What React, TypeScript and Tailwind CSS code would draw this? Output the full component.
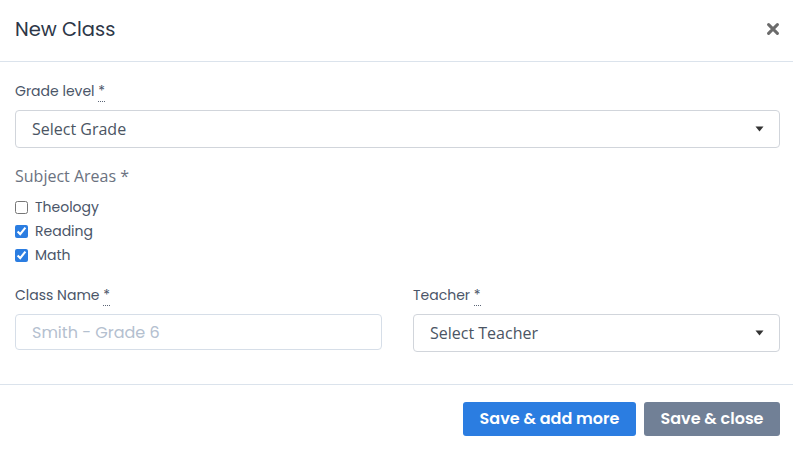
import { useState } from "react";

const poppins = { fontFamily: "Poppins, 'Open Sans', 'Noto Sans', sans-serif" };

function Req() {
  return (
    <abbr title="required" className="no-underline border-b border-dotted border-[#5b6576] leading-none">
      *
    </abbr>
  );
}

function Caret() {
  return (
    <svg width="9" height="6" viewBox="0 0 9 6" className="absolute right-[15px] top-1/2 -translate-y-1/2">
      <path d="M0.5 0.5 H8.5 L4.5 5.5 Z" fill="#333" />
    </svg>
  );
}

function SelectBox({ text }: { text: string }) {
  return (
    <div className="relative flex h-[38px] items-center rounded-[4px] border border-[#d1d5db] bg-white pl-4 text-[16px] text-[#4b5563] font-['Open_Sans',sans-serif]">
      {text}
      <Caret />
    </div>
  );
}

function Check({ label, checked }: { label: string; checked: boolean }) {
  const [on, setOn] = useState(checked);
  return (
    <label className="flex h-6 items-center gap-[7px] text-[14px] text-[#4a5568]">
      <input
        type="checkbox"
        checked={on}
        onChange={() => setOn(!on)}
        className="m-0 h-[13px] w-[13px] accent-[#2b7de1]"
      />
      <span style={poppins}>{label}</span>
    </label>
  );
}

export default function App() {
  return (
    <div className="h-[450px] w-[793px] overflow-hidden bg-white">
      {/* header */}
      <div className="flex h-[62px] items-center justify-between border-b border-[#dbe3ec] pl-[15px] pr-[13px]">
        <h1 className="mb-[1px] text-[19.5px] text-[#2d3748]" style={poppins}>New Class</h1>
        <button className="mr-[1px] mb-[3px] p-0" aria-label="Close">
          <svg width="12" height="12" viewBox="0 0 12 12">
            <path d="M1.6 1.6 L10.4 10.4 M10.4 1.6 L1.6 10.4" stroke="#6b6b6b" strokeWidth="3" strokeLinecap="round" />
          </svg>
        </button>
      </div>

      {/* body */}
      <div className="pl-[15px] pr-[13px] pt-[19px] pb-[32px] border-b border-[#dbe3ec]">
        <div className="mb-[9px] h-5 text-[14px] leading-5 text-[#4a5568]" style={poppins}>
          Grade level <Req />
        </div>
        <SelectBox text="Select Grade" />

        <div className="mt-4 h-6 text-[16px] leading-6 text-[#6b7280] font-['Open_Sans',sans-serif]">
          Subject Areas *
        </div>
        <div className="mt-[7px] flex flex-col">
          <Check label="Theology" checked={false} />
          <Check label="Reading" checked={true} />
          <Check label="Math" checked={true} />
        </div>

        <div className="mt-[18px] grid grid-cols-2 gap-x-[31px]">
          <div>
            <div className="mb-[9px] h-5 text-[14px] leading-5 text-[#4a5568]" style={poppins}>
              Class Name <Req />
            </div>
            <input
              placeholder="Smith - Grade 6"
              className="h-[36px] w-full rounded-[4px] border border-[#d6dee8] px-4 text-[16px] outline-none placeholder:text-[#b4c0cf]"
              style={poppins}
            />
          </div>
          <div>
            <div className="mb-[9px] h-5 text-[14px] leading-5 text-[#4a5568]" style={poppins}>
              Teacher <Req />
            </div>
            <SelectBox text="Select Teacher" />
          </div>
        </div>
      </div>

      {/* footer */}
      <div className="flex justify-end gap-2 pl-[15px] pr-[13px] pt-[17px]" style={poppins}>
        <button className="h-[34px] w-[173px] rounded-[3px] bg-[#2b7de1] text-[16px] font-semibold text-white">
          Save &amp; add more
        </button>
        <button className="h-[34px] w-[136px] rounded-[3px] bg-[#718096] text-[16px] font-semibold text-white">
          Save &amp; close
        </button>
      </div>
    </div>
  );
}
